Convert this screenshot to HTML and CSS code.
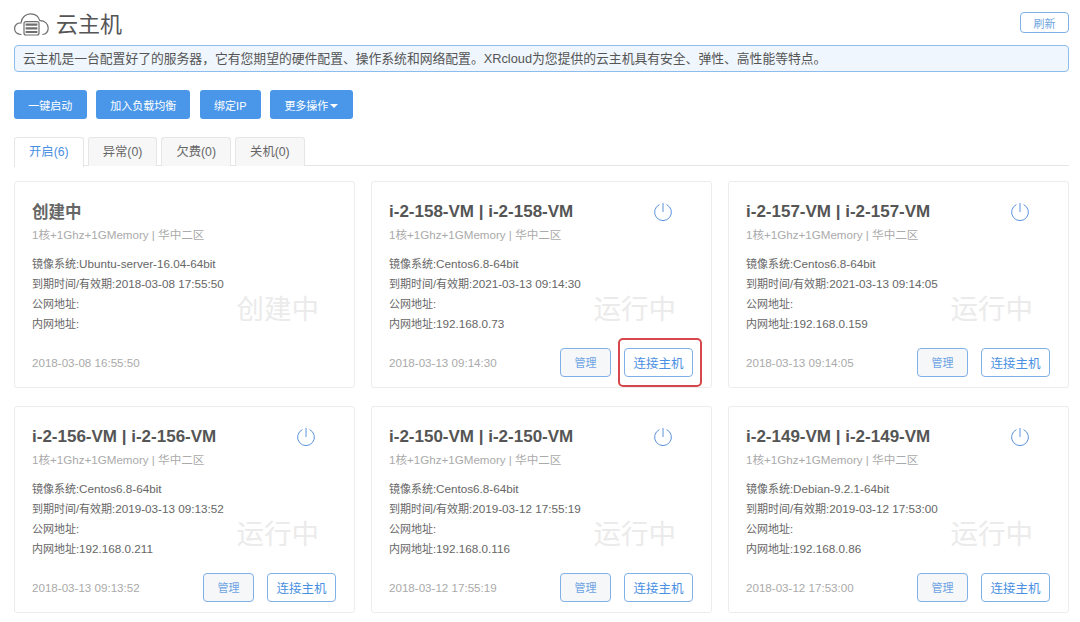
FILE: index.html
```html
<!DOCTYPE html>
<html lang="zh-CN">
<head>
    <meta charset="UTF-8">
    <title>云主机</title>
    <link rel="stylesheet" href="styles.css">
</head>
<body>
    <div class="page">
        <div class="page-head">
            <svg class="cloud-icon" width="35" height="23" viewBox="0 0 35 23" fill="none" stroke="#6e6e6e" stroke-width="1.2" stroke-linecap="round">
                <path d="M7 21.5 C2.5 21 0.6 18.5 0.6 15.5 C0.6 12 3.4 9.6 7 9.8 C7.6 4.4 11.8 0.8 16.6 0.8 C21 0.8 24.6 3.6 25.8 7.6 C30.4 7.4 34.2 10.8 34.2 15 C34.2 18.4 32 21 28.8 21.5"/>
                <rect x="10" y="8.6" width="15" height="13.4" rx="2"/>
                <path d="M11.6 11.6 H23.4 M11.6 15.3 H23.4 M11.6 19 H23.4" stroke-width="2.2" stroke-linecap="butt"/>
            </svg>
            <h1>云主机</h1>
            <button class="btn-refresh">刷新</button>
        </div>

        <div class="notice">云主机是一台配置好了的服务器，它有您期望的硬件配置、操作系统和网络配置。XRcloud为您提供的云主机具有安全、弹性、高性能等特点。</div>

        <div class="actions">
            <button class="btn-primary">一键启动</button>
            <button class="btn-primary">加入负载均衡</button>
            <button class="btn-primary">绑定IP</button>
            <button class="btn-primary">更多操作<span class="caret"></span></button>
        </div>

        <ul class="tabs">
            <li class="tab active">开启(6)</li>
            <li class="tab">异常(0)</li>
            <li class="tab">欠费(0)</li>
            <li class="tab">关机(0)</li>
        </ul>

        <div class="cards">
            <div class="card">
                <div class="card-title"><h3 class="creating">创建中</h3></div>
                <p class="spec">1核+1Ghz+1GMemory | 华中二区</p>
                <ul class="info">
                    <li><span class="label">镜像系统:</span>Ubuntu-server-16.04-64bit</li>
                    <li><span class="label">到期时间/有效期:</span>2018-03-08 17:55:50</li>
                    <li><span class="label">公网地址:</span></li>
                    <li><span class="label">内网地址:</span></li>
                </ul>
                <div class="card-foot"><span class="created">2018-03-08 16:55:50</span></div>
                <span class="status">创建中</span>
            </div>

            <div class="card">
                <div class="card-title">
                    <h3>i-2-158-VM | i-2-158-VM</h3>
                    <svg class="power" width="20" height="20" viewBox="0 0 20 20" fill="none" stroke="#5b93dc" stroke-width="1"><path d="M6.4 2.6 A8.4 8.4 0 1 0 13.6 2.6"/><path d="M10 1 V10"/></svg>
                </div>
                <p class="spec">1核+1Ghz+1GMemory | 华中二区</p>
                <ul class="info">
                    <li><span class="label">镜像系统:</span>Centos6.8-64bit</li>
                    <li><span class="label">到期时间/有效期:</span>2021-03-13 09:14:30</li>
                    <li><span class="label">公网地址:</span></li>
                    <li><span class="label">内网地址:</span>192.168.0.73</li>
                </ul>
                <div class="card-foot">
                    <span class="created">2018-03-13 09:14:30</span>
                    <button class="btn-manage">管理</button>
                    <span class="highlight"><button class="btn-connect">连接主机</button></span>
                </div>
                <span class="status">运行中</span>
            </div>

            <div class="card">
                <div class="card-title">
                    <h3>i-2-157-VM | i-2-157-VM</h3>
                    <svg class="power" width="20" height="20" viewBox="0 0 20 20" fill="none" stroke="#5b93dc" stroke-width="1"><path d="M6.4 2.6 A8.4 8.4 0 1 0 13.6 2.6"/><path d="M10 1 V10"/></svg>
                </div>
                <p class="spec">1核+1Ghz+1GMemory | 华中二区</p>
                <ul class="info">
                    <li><span class="label">镜像系统:</span>Centos6.8-64bit</li>
                    <li><span class="label">到期时间/有效期:</span>2021-03-13 09:14:05</li>
                    <li><span class="label">公网地址:</span></li>
                    <li><span class="label">内网地址:</span>192.168.0.159</li>
                </ul>
                <div class="card-foot">
                    <span class="created">2018-03-13 09:14:05</span>
                    <button class="btn-manage">管理</button>
                    <button class="btn-connect">连接主机</button>
                </div>
                <span class="status">运行中</span>
            </div>

            <div class="card">
                <div class="card-title">
                    <h3>i-2-156-VM | i-2-156-VM</h3>
                    <svg class="power" width="20" height="20" viewBox="0 0 20 20" fill="none" stroke="#5b93dc" stroke-width="1"><path d="M6.4 2.6 A8.4 8.4 0 1 0 13.6 2.6"/><path d="M10 1 V10"/></svg>
                </div>
                <p class="spec">1核+1Ghz+1GMemory | 华中二区</p>
                <ul class="info">
                    <li><span class="label">镜像系统:</span>Centos6.8-64bit</li>
                    <li><span class="label">到期时间/有效期:</span>2019-03-13 09:13:52</li>
                    <li><span class="label">公网地址:</span></li>
                    <li><span class="label">内网地址:</span>192.168.0.211</li>
                </ul>
                <div class="card-foot">
                    <span class="created">2018-03-13 09:13:52</span>
                    <button class="btn-manage">管理</button>
                    <button class="btn-connect">连接主机</button>
                </div>
                <span class="status">运行中</span>
            </div>

            <div class="card">
                <div class="card-title">
                    <h3>i-2-150-VM | i-2-150-VM</h3>
                    <svg class="power" width="20" height="20" viewBox="0 0 20 20" fill="none" stroke="#5b93dc" stroke-width="1"><path d="M6.4 2.6 A8.4 8.4 0 1 0 13.6 2.6"/><path d="M10 1 V10"/></svg>
                </div>
                <p class="spec">1核+1Ghz+1GMemory | 华中二区</p>
                <ul class="info">
                    <li><span class="label">镜像系统:</span>Centos6.8-64bit</li>
                    <li><span class="label">到期时间/有效期:</span>2019-03-12 17:55:19</li>
                    <li><span class="label">公网地址:</span></li>
                    <li><span class="label">内网地址:</span>192.168.0.116</li>
                </ul>
                <div class="card-foot">
                    <span class="created">2018-03-12 17:55:19</span>
                    <button class="btn-manage">管理</button>
                    <button class="btn-connect">连接主机</button>
                </div>
                <span class="status">运行中</span>
            </div>

            <div class="card">
                <div class="card-title">
                    <h3>i-2-149-VM | i-2-149-VM</h3>
                    <svg class="power" width="20" height="20" viewBox="0 0 20 20" fill="none" stroke="#5b93dc" stroke-width="1"><path d="M6.4 2.6 A8.4 8.4 0 1 0 13.6 2.6"/><path d="M10 1 V10"/></svg>
                </div>
                <p class="spec">1核+1Ghz+1GMemory | 华中二区</p>
                <ul class="info">
                    <li><span class="label">镜像系统:</span>Debian-9.2.1-64bit</li>
                    <li><span class="label">到期时间/有效期:</span>2019-03-12 17:53:00</li>
                    <li><span class="label">公网地址:</span></li>
                    <li><span class="label">内网地址:</span>192.168.0.86</li>
                </ul>
                <div class="card-foot">
                    <span class="created">2018-03-12 17:53:00</span>
                    <button class="btn-manage">管理</button>
                    <button class="btn-connect">连接主机</button>
                </div>
                <span class="status">运行中</span>
            </div>
        </div>
    </div>
</body>
</html>
```

FILE: styles.css
```css
* {
    box-sizing: border-box;
}
body {
    margin: 0;
    background-color: #fff;
    font-family: "Liberation Sans", "Noto Sans CJK SC", sans-serif;
    color: #555;
    overflow: hidden;
}
button {
    font-family: inherit;
}
.page {
    padding: 7px 11px 0 14px;
}
.page-head {
    display: flex;
    align-items: center;
    height: 29px;
}
.cloud-icon {
    flex: none;
    margin-top: 5px;
}
.page-head h1 {
    margin: 0 0 0 7px;
    font-size: 22px;
    font-weight: 400;
    color: #555;
}
.btn-refresh {
    margin: 2px 0 0 auto;
    width: 49px;
    height: 21px;
    padding: 0;
    font-size: 11px;
    color: #6ea4e4;
    background-color: #fff;
    border: 1px solid #7fb0e6;
    border-radius: 4px;
}
.notice {
    height: 27px;
    margin-top: 9px;
    padding-left: 8px;
    font-size: 12.8px;
    line-height: 25px;
    color: #555;
    background-color: #eff6fd;
    border: 1px solid #8dbdec;
    border-radius: 4px;
}
.actions {
    display: flex;
    gap: 9.3px;
    margin-top: 18px;
}
.btn-primary {
    height: 29px;
    padding: 0 14.3px;
    font-size: 11px;
    color: #fff;
    background-color: #4a97ea;
    border: none;
    border-radius: 3px;
}
.caret {
    display: inline-block;
    margin-left: 2px;
    vertical-align: 2px;
    border-top: 4px solid #fff;
    border-left: 4px solid transparent;
    border-right: 4px solid transparent;
}
.tabs {
    display: flex;
    gap: 4px;
    height: 29px;
    margin: 18px 0 0;
    padding: 0;
    list-style: none;
    border-bottom: 1px solid #e6e6e6;
}
.tab {
    width: 69.7px;
    height: 29px;
    font-size: 12.3px;
    line-height: 28px;
    text-align: center;
    color: #666;
    background-color: #f7f7f7;
    border: 1px solid #e6e6e6;
    border-bottom: none;
    border-radius: 3px 3px 0 0;
}
.tab.active {
    height: 30px;
    color: #4a90e2;
    background-color: #fff;
}
.cards {
    display: grid;
    grid-template-columns: repeat(3, 341px);
    grid-auto-rows: 207px;
    column-gap: 16px;
    row-gap: 18px;
    margin-top: 15px;
}
.card {
    position: relative;
    padding: 20px 17px 0;
    background-color: #fff;
    border: 1px solid #ececec;
    border-radius: 3px;
}
.card-title {
    display: flex;
    justify-content: space-between;
    align-items: center;
    height: 20px;
}
.card-title h3 {
    margin: 0;
    font-size: 17px;
    font-weight: 700;
    color: #555;
}
.card-title .creating {
    margin-top: -3px;
    font-size: 16.5px;
    color: #666;
}
.power {
    margin-right: 21px;
}
.spec {
    margin: 5px 0 0;
    font-size: 11.6px;
    line-height: 16px;
    color: #aaa;
}
.info {
    margin: 11px 0 0;
    padding: 0;
    list-style: none;
    font-size: 11.7px;
    line-height: 20px;
    color: #666;
}
.label {
    font-size: 11px;
}
.card-foot {
    display: flex;
    align-items: center;
    gap: 13px;
    position: absolute;
    left: 17px;
    right: 18px;
    bottom: 10px;
    height: 30px;
}
.created {
    margin-right: auto;
    font-size: 11.6px;
    color: #aaa;
}
.btn-manage,
.btn-connect {
    height: 29px;
    padding: 0;
    color: #4a90e2;
    border: 1px solid #7fb0e6;
    border-radius: 4px;
}
.btn-manage {
    width: 51px;
    font-size: 11px;
    color: #6ea4e4;
    background-color: #f6f7f8;
}
.btn-connect {
    width: 69px;
    font-size: 12.5px;
    background-color: #fff;
}
.highlight {
    position: relative;
    display: flex;
}
.highlight::after {
    content: "";
    position: absolute;
    inset: -10px -9px -10px -6px;
    border: 2.5px solid #d5474a;
    border-radius: 5px;
}
.status {
    position: absolute;
    right: 35px;
    top: 109px;
    font-size: 27.5px;
    line-height: 38px;
    color: #ebebeb;
}
```
